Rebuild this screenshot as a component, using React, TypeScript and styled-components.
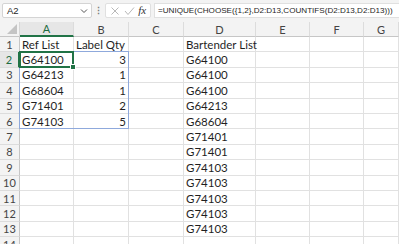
import React from 'react';
import styled, { createGlobalStyle } from 'styled-components';

const GlobalStyle = createGlobalStyle`
  html, body {
    margin: 0;
    padding: 0;
    background: #ffffff;
    overflow: hidden;
  }
  body {
    font-family: 'Lato', 'Open Sans', sans-serif;
  }
`;

const Page = styled.div`
  width: 399px;
  height: 244px;
  overflow: hidden;
  background: #ffffff;
`;

const FormulaBar = styled.div`
  height: 22px;
  display: flex;
  align-items: center;
  padding: 0 0 1px 2px;
  background: #f3f3f3;
  box-sizing: border-box;
`;

const NameBox = styled.div`
  width: 90px;
  height: 15px;
  box-sizing: border-box;
  background: #ffffff;
  border: 1px solid #d4d4d4;
  border-radius: 2px;
  display: flex;
  align-items: center;
  justify-content: space-between;
  padding: 0 3px 0 4px;
  font-family: 'Liberation Sans', Arial, sans-serif;
  font-size: 9.5px;
  color: #262626;
`;

const Dots = styled.div`
  width: 13px;
  display: flex;
  justify-content: center;
  color: #7a7a7a;
  font-size: 9px;
  font-weight: bold;
`;

const FxBox = styled.div`
  width: 46px;
  height: 15px;
  box-sizing: border-box;
  background: #ffffff;
  border: 1px solid #e0e0e0;
  border-radius: 2px;
  display: flex;
  align-items: center;
  justify-content: space-around;
  padding: 0 2px;
`;

const FxLabel = styled.span`
  font-family: 'Liberation Serif', 'DejaVu Serif', serif;
  font-style: italic;
  font-size: 11px;
  color: #333333;
  line-height: 1;
`;

const FormulaInput = styled.div`
  flex: 1;
  height: 15px;
  margin-left: 3px;
  box-sizing: border-box;
  background: #ffffff;
  border: 1px solid #e0e0e0;
  border-right: none;
  display: flex;
  align-items: center;
  padding-left: 3px;
  font-family: 'Liberation Sans', Arial, sans-serif;
  font-size: 8.1px;
  color: #262626;
  white-space: nowrap;
  overflow: hidden;
`;

const Sheet = styled.div`
  display: grid;
  grid-template-columns: 20px 54px 55px 55px 72px 54px 54px 1fr;
  grid-template-rows: 15px repeat(14, 15.4px);
  font-family: 'Lato', 'Open Sans', sans-serif;
  font-size: 11.5px;
  color: #1f1f1f;
`;

const Corner = styled.div`
  grid-row: 1;
  grid-column: 1;
  background: #f3f3f3;
  border-right: 1px solid #d6d6d6;
  border-bottom: 1px solid #c6c6c6;
  box-sizing: border-box;
  display: flex;
  align-items: flex-end;
  justify-content: flex-end;
  padding: 0 2px 2px 0;
`;

const ColHeader = styled.div<{ $col: number; $active?: boolean }>`
  grid-row: 1;
  grid-column: ${p => p.$col};
  background: ${p => (p.$active ? '#e6e6e6' : '#f3f3f3')};
  border-right: 1px solid #dcdcdc;
  border-bottom: ${p => (p.$active ? '2px solid #217346' : '1px solid #c6c6c6')};
  box-sizing: border-box;
  display: flex;
  align-items: center;
  justify-content: center;
  color: ${p => (p.$active ? '#1e6b41' : '#444444')};
  font-size: 11px;
`;

const RowHeader = styled.div<{ $row: number; $active?: boolean }>`
  grid-row: ${p => p.$row + 1};
  grid-column: 1;
  background: ${p => (p.$active ? '#e6e6e6' : '#f3f3f3')};
  border-right: ${p => (p.$active ? '2px solid #217346' : '1px solid #c6c6c6')};
  border-bottom: 1px solid #dcdcdc;
  box-sizing: border-box;
  display: flex;
  align-items: center;
  justify-content: center;
  color: ${p => (p.$active ? '#1e6b41' : '#444444')};
  font-size: 11px;
`;

const Cell = styled.div<{ $row: number; $col: number; $right?: boolean }>`
  grid-row: ${p => p.$row + 1};
  grid-column: ${p => p.$col};
  border-right: 1px solid #e1e1e1;
  border-bottom: 1px solid #e1e1e1;
  box-sizing: border-box;
  display: flex;
  align-items: center;
  justify-content: ${p => (p.$right ? 'flex-end' : 'flex-start')};
  padding: 0 2px;
  white-space: nowrap;
`;

const SpillRange = styled.div`
  grid-row: 3 / 8;
  grid-column: 2 / 4;
  margin: -1px 0 0 -1px;
  border: 1px solid #8fa9dc;
  pointer-events: none;
  z-index: 1;
`;

const ActiveCell = styled.div`
  grid-row: 3;
  grid-column: 2;
  margin: -1px 0 0 -1px;
  border: 2px solid #217346;
  position: relative;
  pointer-events: none;
  z-index: 2;
`;

const FillHandle = styled.span`
  position: absolute;
  right: -4px;
  bottom: -4px;
  width: 4px;
  height: 4px;
  background: #217346;
  border: 1px solid #ffffff;
`;

const columns = ['A', 'B', 'C', 'D', 'E', 'F', 'G'];

const refList: [string, number][] = [
  ['G64100', 3],
  ['G64213', 1],
  ['G68604', 1],
  ['G71401', 2],
  ['G74103', 5],
];

const bartender = [
  'G64100', 'G64100', 'G64100', 'G64213', 'G68604', 'G71401',
  'G71401', 'G74103', 'G74103', 'G74103', 'G74103', 'G74103',
];

const cellText = (row: number, col: number): string => {
  if (row === 1) {
    if (col === 2) return 'Ref List';
    if (col === 3) return 'Label Qty';
    if (col === 5) return 'Bartender List';
    return '';
  }
  const i = row - 2;
  if (col === 2 && refList[i]) return refList[i][0];
  if (col === 3 && refList[i]) return String(refList[i][1]);
  if (col === 5 && bartender[i]) return bartender[i];
  return '';
};

const App: React.FC = () => {
  const rows = Array.from({ length: 14 }, (_, i) => i + 1);
  return (
    <Page>
      <GlobalStyle />
      <FormulaBar>
        <NameBox>
          <span>A2</span>
          <svg width="8" height="6" viewBox="0 0 8 6">
            <path d="M1 1.5 L4 4.5 L7 1.5" fill="none" stroke="#555" strokeWidth="1" />
          </svg>
        </NameBox>
        <Dots>⋮</Dots>
        <FxBox>
          <svg width="10" height="10" viewBox="0 0 10 10">
            <path d="M1.5 1.5 L8.5 8.5 M8.5 1.5 L1.5 8.5" stroke="#b8b8b8" strokeWidth="1" />
          </svg>
          <svg width="11" height="10" viewBox="0 0 11 10">
            <path d="M1 5 L4 8.5 L10 1.5" fill="none" stroke="#b8b8b8" strokeWidth="1" />
          </svg>
          <FxLabel>fx</FxLabel>
        </FxBox>
        <FormulaInput>=UNIQUE(CHOOSE({'{'}1,2{'}'},D2:D13,COUNTIFS(D2:D13,D2:D13)))</FormulaInput>
      </FormulaBar>
      <Sheet>
        <Corner>
          <svg width="10" height="10" viewBox="0 0 10 10">
            <path d="M10 0 L10 10 L0 10 Z" fill="#c4c4c4" />
          </svg>
        </Corner>
        {columns.map((c, i) => (
          <ColHeader key={c} $col={i + 2} $active={c === 'A'}>
            {c}
          </ColHeader>
        ))}
        {rows.map(r => (
          <React.Fragment key={r}>
            <RowHeader $row={r} $active={r === 2}>
              {r}
            </RowHeader>
            {columns.map((c, i) => (
              <Cell key={c} $row={r} $col={i + 2} $right={c === 'B' && r > 1}>
                {cellText(r, i + 2)}
              </Cell>
            ))}
          </React.Fragment>
        ))}
        <SpillRange />
        <ActiveCell>
          <FillHandle />
        </ActiveCell>
      </Sheet>
    </Page>
  );
};

export default App;
